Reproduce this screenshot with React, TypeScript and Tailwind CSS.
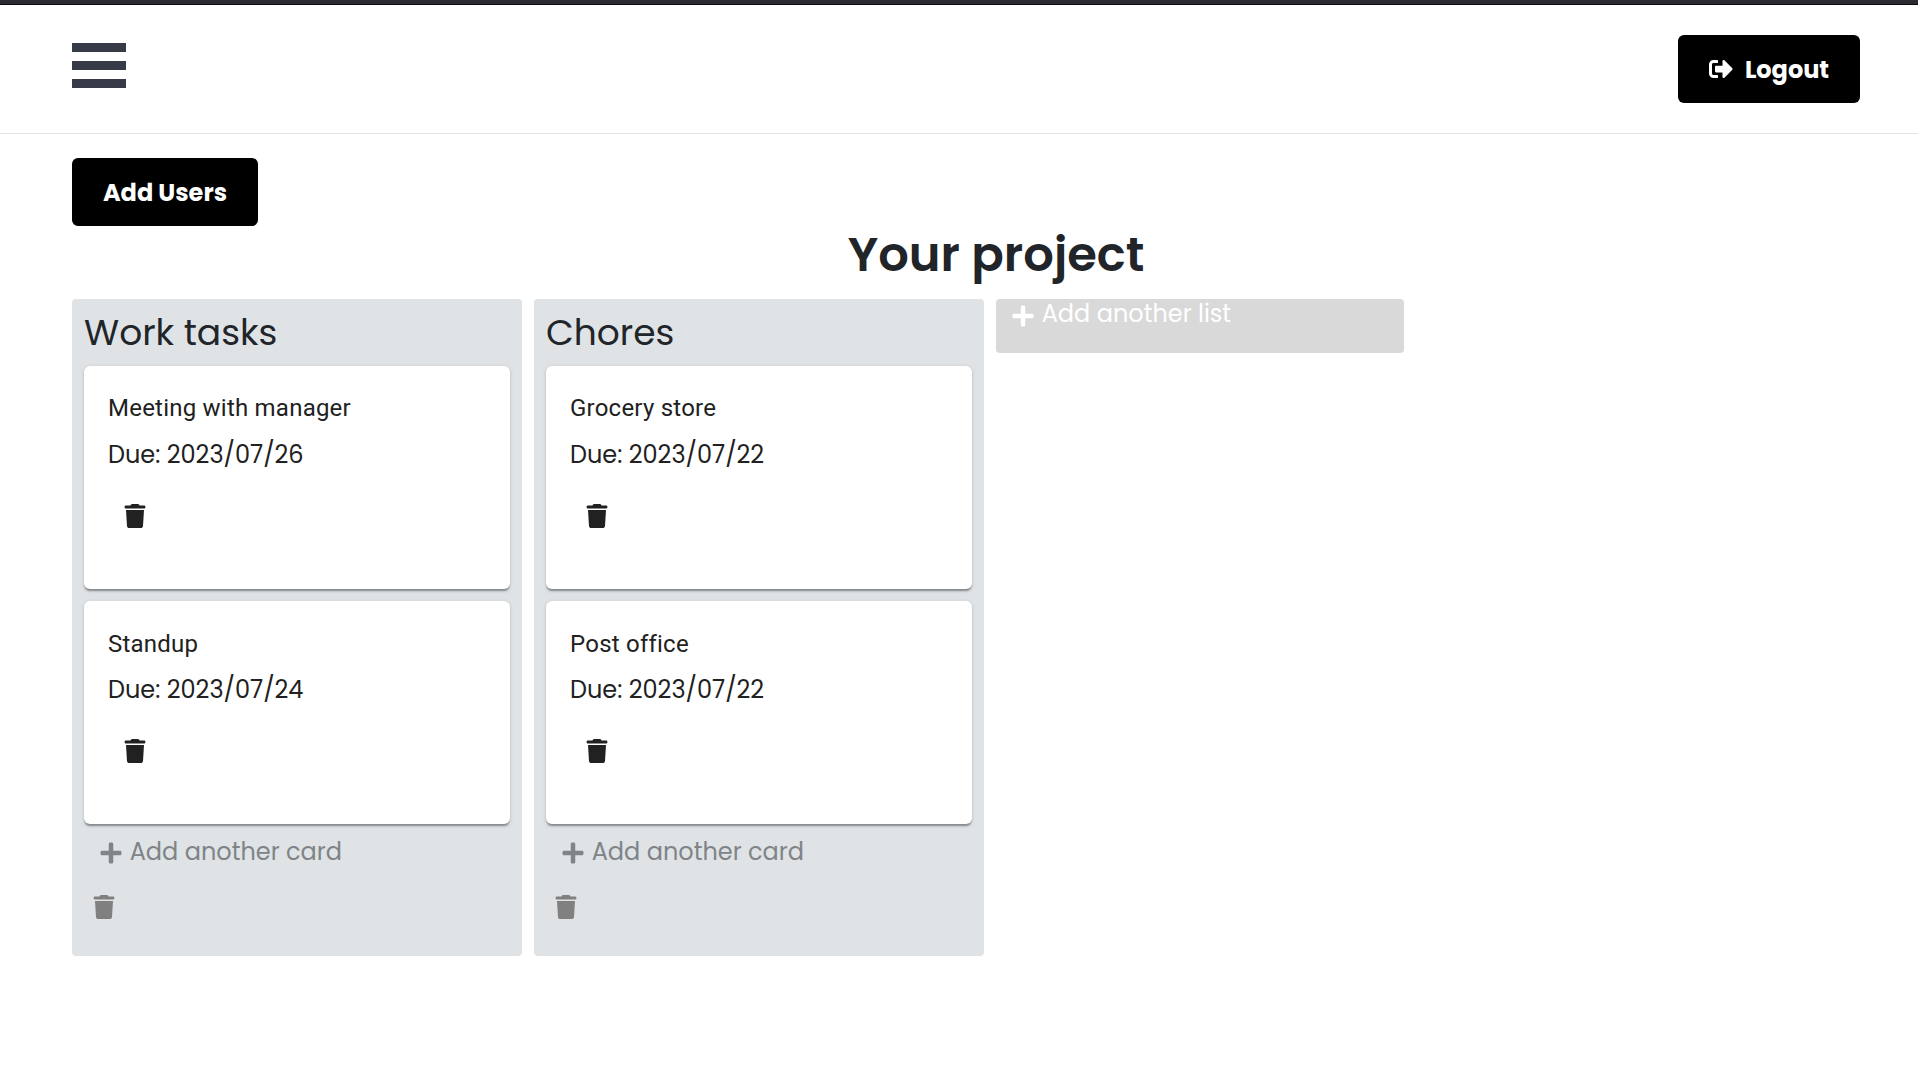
import React from "react";
import { FaPlus, FaSignOutAlt } from "react-icons/fa";
import { FaTrash } from "react-icons/fa6";

type Task = { title: string; due: string };
type List = { name: string; tasks: Task[] };

const lists: List[] = [
  {
    name: "Work tasks",
    tasks: [
      { title: "Meeting with manager", due: "2023/07/26" },
      { title: "Standup", due: "2023/07/24" },
    ],
  },
  {
    name: "Chores",
    tasks: [
      { title: "Grocery store", due: "2023/07/22" },
      { title: "Post office", due: "2023/07/22" },
    ],
  },
];

function TaskCard({ title, due }: Task) {
  return (
    <article className="h-[223.1px] rounded-[6px] bg-white px-6 pt-[24.45px] text-[#212121] shadow-[0_3px_1.5px_-1.5px_rgba(0,0,0,0.2),0_1.5px_1.5px_0_rgba(0,0,0,0.14),0_1.5px_4.5px_0_rgba(0,0,0,0.12)]">
      <h3 className="font-[Roboto] text-2xl leading-9 tracking-[0.00938em]">{title}</h3>
      <p className="mt-[10.8px] leading-9">Due: {due}</p>
      <button className="mt-[30.75px] ml-4 block" aria-label="Delete card">
        <FaTrash className="h-6 w-[22px]" />
      </button>
    </article>
  );
}

function ListColumn({ name, tasks }: List) {
  return (
    <section className="flex h-[657px] w-[450px] flex-col rounded-[4px] bg-[#dfe3e6] px-3 pt-3">
      <h2 className="h-[55px] text-[36px] leading-[43px]">{name}</h2>
      <div className="flex flex-col gap-3">
        {tasks.map((task) => (
          <TaskCard key={task.title} {...task} />
        ))}
      </div>
      <button className="mt-[9.8px] ml-4 flex h-9 items-center gap-[7.7px] text-[#808486]">
        <FaPlus className="mt-[2px] h-6 w-[22px]" />
        <span>Add another card</span>
      </button>
      <button className="mt-[25px] ml-[9px] self-start text-[#808080]" aria-label="Delete list">
        <FaTrash className="h-6 w-[22px]" />
      </button>
    </section>
  );
}

export default function App() {
  return (
    <div className="h-[1072px] overflow-hidden bg-white font-[Poppins,sans-serif] text-2xl text-[#212529]">
      <div className="h-[5px] border-b border-[#0c0c0d] bg-[#2b2a33]" />
      <header className="flex h-[129px] items-start justify-between border-b border-[#e3e3e3] pr-[58px] pl-[72px]">
        <button className="mt-[38px] flex w-[54px] flex-col gap-[9px]" aria-label="Open menu">
          <span className="h-[9px] w-full bg-[#373a47]" />
          <span className="h-[9px] w-full bg-[#373a47]" />
          <span className="h-[9px] w-full bg-[#373a47]" />
        </button>
        <button className="mt-[30px] flex h-[68px] w-[182px] items-center justify-center gap-3 rounded-[6px] bg-black font-bold text-white">
          <FaSignOutAlt className="size-6" />
          <span className="pt-0.5">Logout</span>
        </button>
      </header>
      <main className="pt-6 pl-[72px]">
        <button className="block h-[68px] w-[186px] rounded-[6px] bg-black pt-0.5 font-bold text-white">Add Users</button>
        <h1 className="h-[73px] pl-0.5 text-center text-5xl leading-[58px] font-semibold">Your project</h1>
        <div className="flex items-start gap-3">
          {lists.map((list) => (
            <ListColumn key={list.name} {...list} />
          ))}
          <button className="flex h-[54px] w-[408px] items-start gap-[7.7px] rounded-[4px] bg-[#d9d9d9] pl-4 leading-[30px] text-white">
            <FaPlus className="mt-[5px] h-6 w-[22px]" />
            <span>Add another list</span>
          </button>
        </div>
      </main>
    </div>
  );
}
